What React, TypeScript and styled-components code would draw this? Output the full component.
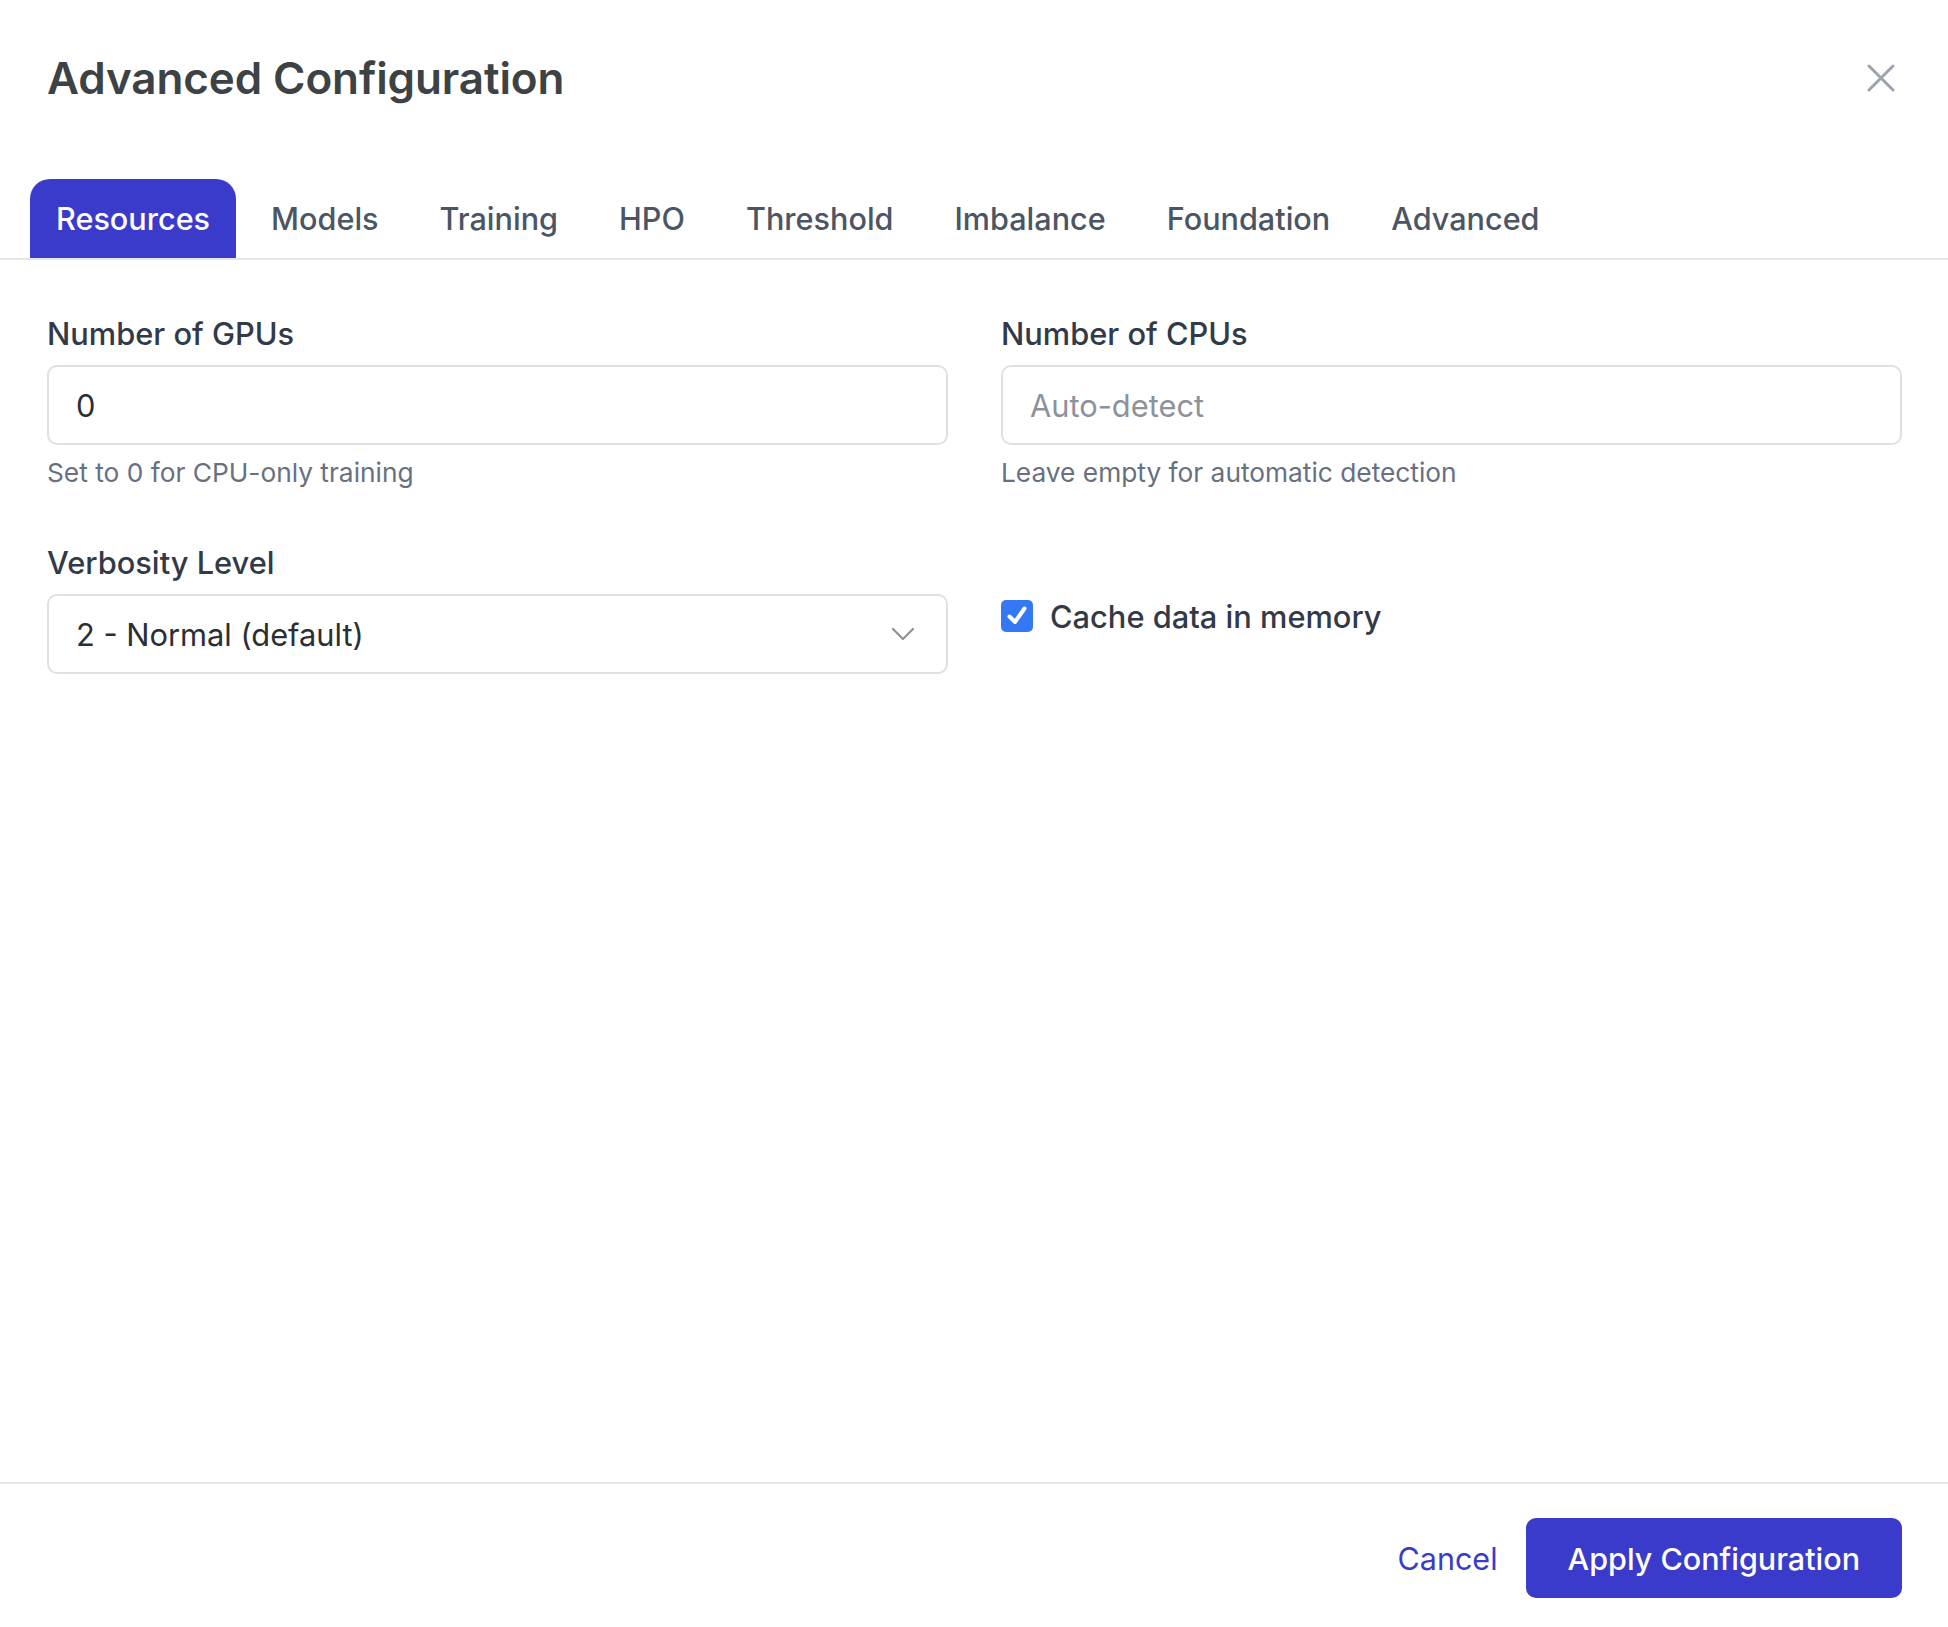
import React, { useState } from "react";
import styled, { createGlobalStyle } from "styled-components";

const Global = createGlobalStyle`
  html, body { margin: 0; padding: 0; background: #ffffff; }
  body { font-family: Inter, "Noto Sans", "Liberation Sans", sans-serif; -webkit-font-smoothing: antialiased; }
  * { box-sizing: border-box; }
`;

const Page = styled.div`
  height: 100vh;
  display: flex;
  flex-direction: column;
  background: #fff;
`;

const Header = styled.header`
  height: 179px;
  padding: 50px 53px 0 47px;
  display: flex;
  justify-content: space-between;
  align-items: flex-start;
`;

const Title = styled.h1`
  margin: 0;
  font-size: 44px;
  line-height: 56px;
  font-weight: 600;
  color: #3d4245;
  letter-spacing: -0.1px;
`;

const CloseButton = styled.button`
  border: none;
  background: none;
  padding: 0;
  margin-top: 14px;
  width: 28px;
  height: 28px;
  display: flex;
  align-items: center;
  justify-content: center;
  color: #9ca3af;
  cursor: pointer;
`;

const TabBar = styled.nav`
  display: flex;
  gap: 9px;
  padding-left: 30px;
  border-bottom: 2px solid #e3e7eb;
`;

const Tab = styled.button<{ $active?: boolean }>`
  height: 79px;
  padding: 0 26px;
  border: none;
  border-radius: 20px 20px 0 0;
  font-family: inherit;
  font-size: 30.6px;
  font-weight: 500;
  background: ${(p) => (p.$active ? "#3b3bcb" : "transparent")};
  color: ${(p) => (p.$active ? "#ffffff" : "#4b5563")};
  cursor: pointer;
`;

const Content = styled.main`
  flex: 1;
  padding: 54px 46px 0 47px;
  display: grid;
  grid-template-columns: 1fr 1fr;
  column-gap: 53px;
  row-gap: 52px;
  align-content: start;
`;

const Field = styled.div<{ $offset?: boolean }>`
  display: flex;
  flex-direction: column;
  padding-top: ${(p) => (p.$offset ? "53px" : "0")};
`;

const Label = styled.label`
  font-size: 30.8px;
  line-height: 40px;
  font-weight: 500;
  color: #323a48;
  margin-bottom: 11px;
`;

const Input = styled.input`
  height: 80px;
  border: 2px solid #dde1e6;
  border-radius: 10px;
  padding: 0 27px;
  font-family: inherit;
  font-size: 30.8px;
  color: #2b2f33;
  outline: none;
  &::placeholder { color: #8d9198; }
`;

const Help = styled.p`
  margin: 10px 0 0;
  font-size: 26.3px;
  line-height: 36px;
  color: #687080;
`;

const SelectBox = styled.div`
  height: 80px;
  border: 2px solid #dde1e6;
  border-radius: 10px;
  padding: 0 31px 0 27px;
  display: flex;
  align-items: center;
  justify-content: space-between;
  font-size: 30.8px;
  color: #2b2f33;
`;

const CheckRow = styled.label`
  display: flex;
  align-items: center;
  gap: 17px;
  height: 40px;
  cursor: pointer;
`;

const Box = styled.span<{ $checked: boolean }>`
  width: 32px;
  height: 32px;
  border-radius: 5px;
  background: ${(p) => (p.$checked ? "#3478f6" : "#fff")};
  border: ${(p) => (p.$checked ? "none" : "2px solid #9ca3af")};
  display: flex;
  align-items: center;
  justify-content: center;
`;

const CheckText = styled.span`
  font-size: 30.8px;
  font-weight: 500;
  color: #323a48;
`;

const Footer = styled.footer`
  border-top: 2px solid #e3e7eb;
  padding: 34px 46px 29px 0;
  display: flex;
  justify-content: flex-end;
  align-items: center;
  gap: 28px;
`;

const CancelButton = styled.button`
  border: none;
  background: none;
  padding: 0;
  font-family: inherit;
  font-size: 30.5px;
  font-weight: 400;
  color: #3b3bcb;
  cursor: pointer;
`;

const ApplyButton = styled.button`
  height: 80px;
  padding: 0 42px;
  border: none;
  border-radius: 10px;
  background: #3b3bcb;
  color: #fff;
  font-family: inherit;
  font-size: 30.5px;
  font-weight: 500;
  cursor: pointer;
`;

const tabs = ["Resources", "Models", "Training", "HPO", "Threshold", "Imbalance", "Foundation", "Advanced"];

export default function App() {
  const [active, setActive] = useState("Resources");
  const [cache, setCache] = useState(true);
  return (
    <Page>
      <Global />
      <Header>
        <Title>Advanced Configuration</Title>
        <CloseButton aria-label="Close">
          <svg width="28" height="28" viewBox="0 0 28 28" fill="none" stroke="currentColor" strokeWidth="3" strokeLinecap="round">
            <path d="M2 2 L26 26 M26 2 L2 26" />
          </svg>
        </CloseButton>
      </Header>
      <TabBar>
        {tabs.map((t) => (
          <Tab key={t} $active={t === active} onClick={() => setActive(t)}>
            {t}
          </Tab>
        ))}
      </TabBar>
      <Content>
        <Field>
          <Label>Number of GPUs</Label>
          <Input defaultValue="0" />
          <Help>Set to 0 for CPU-only training</Help>
        </Field>
        <Field>
          <Label>Number of CPUs</Label>
          <Input placeholder="Auto-detect" />
          <Help>Leave empty for automatic detection</Help>
        </Field>
        <Field>
          <Label>Verbosity Level</Label>
          <SelectBox>
            <span>2 - Normal (default)</span>
            <svg width="24" height="14" viewBox="0 0 24 14" fill="none" stroke="#8e9297" strokeWidth="2.2" strokeLinecap="round" strokeLinejoin="round">
              <path d="M2 2 L12 12 L22 2" />
            </svg>
          </SelectBox>
        </Field>
        <Field $offset>
          <CheckRow onClick={() => setCache(!cache)}>
            <Box $checked={cache}>
              {cache && (
                <svg width="24" height="24" viewBox="0 0 24 24" fill="none" stroke="#fff" strokeWidth="4" strokeLinecap="round" strokeLinejoin="round">
                  <path d="M4.5 12.5 L10 18 L19.5 4.5" />
                </svg>
              )}
            </Box>
            <CheckText>Cache data in memory</CheckText>
          </CheckRow>
        </Field>
      </Content>
      <Footer>
        <CancelButton>Cancel</CancelButton>
        <ApplyButton>Apply Configuration</ApplyButton>
      </Footer>
    </Page>
  );
}
